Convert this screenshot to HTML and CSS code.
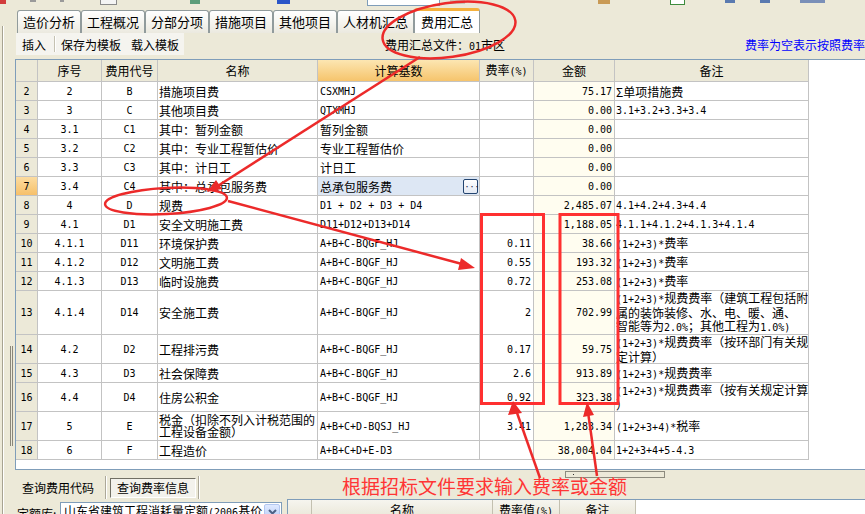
FILE: index.html
```html
<!DOCTYPE html>
<html lang="zh-CN">
<head>
<meta charset="utf-8">
<title>费用汇总</title>
<link rel="stylesheet" href="styles.css">
</head>
<body>
<div class="top">
  <span class="ic ic-red"></span>
  <span class="ic ic-g1"></span>
  <span class="ic ic-g2"></span>
  <span class="ic ic-grid"></span>
  <span class="ic ic-green"></span>
  <span class="ic ic-blue"></span>
  <span class="ic ic-box"></span>
  <span class="ic ic-g3"></span>
  <span class="ic ic-orange"></span>
  <span class="ic ic-gbox"></span>
  <span class="ic ic-b1"></span>
  <span class="ic ic-b2"></span>
  <span class="ic ic-b3"></span>
</div>
<div class="app">
  <div class="side"><span class="s1"></span><span class="s2"></span></div>
  <div class="main">
    <div class="tabs">
      <div class="tab">造价分析</div>
      <div class="tab">工程概况</div>
      <div class="tab">分部分项</div>
      <div class="tab">措施项目</div>
      <div class="tab">其他项目</div>
      <div class="tab">人材机汇总</div>
      <div class="tab active">费用汇总</div>
    </div>
    <div class="toolbar">
      <div class="tbgroup"><span>插入</span><span class="sep"></span><span>保存为模板</span><span class="gap">载入模板</span></div>
      <span class="file">费用汇总文件：<span class="m">01</span>市区</span>
      <span class="hint">费率为空表示按照费率</span>
    </div>
    <div class="panel">
      <table class="grid">
        <tr>
          <th class="rh w0"></th><th class="w1">序号</th><th class="w2">费用代号</th><th class="w3">名称</th><th class="w4 hl">计算基数</th><th class="w5">费率<span class="m">(%)</span></th><th class="w6">金额</th><th class="w7">备注</th>
        </tr>
        <tr><td class="rh m">2</td><td class="c m">2</td><td class="c m">B</td><td class="nm">措施项目费</td><td class="m">CSXMHJ</td><td class="r m"></td><td class="amt m">75.17</td><td class="nt">Σ单项措施费</td></tr>
        <tr><td class="rh m">3</td><td class="c m">3</td><td class="c m">C</td><td class="nm">其他项目费</td><td class="m">QTXMHJ</td><td class="r m"></td><td class="amt m">0.00</td><td class="nt m">3.1+3.2+3.3+3.4</td></tr>
        <tr><td class="rh m">4</td><td class="c m">3.1</td><td class="c m">C1</td><td class="nm">其中：暂列金额</td><td>暂列金额</td><td class="r m"></td><td class="amt m">0.00</td><td class="nt"></td></tr>
        <tr><td class="rh m">5</td><td class="c m">3.2</td><td class="c m">C2</td><td class="nm">其中：专业工程暂估价</td><td>专业工程暂估价</td><td class="r m"></td><td class="amt m">0.00</td><td class="nt"></td></tr>
        <tr><td class="rh m">6</td><td class="c m">3.3</td><td class="c m">C3</td><td class="nm">其中：计日工</td><td>计日工</td><td class="r m"></td><td class="amt m">0.00</td><td class="nt"></td></tr>
        <tr><td class="rh m selrh">7</td><td class="c m">3.4</td><td class="c m">C4</td><td class="nm">其中：总承包服务费</td><td class="selcell"><div class="cellflex"><span>总承包服务费</span><span class="dots">•••</span></div></td><td class="r m"></td><td class="amt m">0.00</td><td class="nt"></td></tr>
        <tr><td class="rh m">8</td><td class="c m">4</td><td class="c m">D</td><td class="nm">规费</td><td class="m">D1 + D2 + D3 + D4</td><td class="r m"></td><td class="amt m">2,485.07</td><td class="nt m">4.1+4.2+4.3+4.4</td></tr>
        <tr><td class="rh m">9</td><td class="c m">4.1</td><td class="c m">D1</td><td class="nm">安全文明施工费</td><td class="m">D11+D12+D13+D14</td><td class="r m"></td><td class="amt m">1,188.05</td><td class="nt m">4.1.1+4.1.2+4.1.3+4.1.4</td></tr>
        <tr><td class="rh m">10</td><td class="c m">4.1.1</td><td class="c m">D11</td><td class="nm">环境保护费</td><td class="m">A+B+C-BQGF_HJ</td><td class="r m">0.11</td><td class="amt m">38.66</td><td class="nt"><span class="m">(1+2+3)*</span>费率</td></tr>
        <tr><td class="rh m">11</td><td class="c m">4.1.2</td><td class="c m">D12</td><td class="nm">文明施工费</td><td class="m">A+B+C-BQGF_HJ</td><td class="r m">0.55</td><td class="amt m">193.32</td><td class="nt"><span class="m">(1+2+3)*</span>费率</td></tr>
        <tr><td class="rh m">12</td><td class="c m">4.1.3</td><td class="c m">D13</td><td class="nm">临时设施费</td><td class="m">A+B+C-BQGF_HJ</td><td class="r m">0.72</td><td class="amt m">253.08</td><td class="nt"><span class="m">(1+2+3)*</span>费率</td></tr>
        <tr class="h42"><td class="rh m">13</td><td class="c m">4.1.4</td><td class="c m">D14</td><td class="nm">安全施工费</td><td class="m">A+B+C-BQGF_HJ</td><td class="r m">2</td><td class="amt m">702.99</td><td class="nt"><span class="m">(1+2+3)*</span>规费费率（建筑工程包括附<br>属的装饰装修、水、电、暖、通、<br>智能等为<span class="m">2.0%</span>；其他工程为<span class="m">1.0%)</span></td></tr>
        <tr class="h28"><td class="rh m">14</td><td class="c m">4.2</td><td class="c m">D2</td><td class="nm">工程排污费</td><td class="m">A+B+C-BQGF_HJ</td><td class="r m">0.17</td><td class="amt m">59.75</td><td class="nt"><span class="m">(1+2+3)*</span>规费费率（按环部门有关规<br>定计算）</td></tr>
        <tr><td class="rh m">15</td><td class="c m">4.3</td><td class="c m">D3</td><td class="nm">社会保障费</td><td class="m">A+B+C-BQGF_HJ</td><td class="r m">2.6</td><td class="amt m">913.89</td><td class="nt"><span class="m">(1+2+3)*</span>规费费率</td></tr>
        <tr class="h29"><td class="rh m">16</td><td class="c m">4.4</td><td class="c m">D4</td><td class="nm">住房公积金</td><td class="m">A+B+C-BQGF_HJ</td><td class="r m">0.92</td><td class="amt m">323.38</td><td class="nt"><span class="m">(1+2+3)*</span>规费费率（按有关规定计算<br>）</td></tr>
        <tr class="h29"><td class="rh m">17</td><td class="c m">5</td><td class="c m">E</td><td class="nm tight">税金（扣除不列入计税范围的<br>工程设备金额）</td><td class="m">A+B+C+D-BQSJ_HJ</td><td class="r m">3.41</td><td class="amt m">1,283.34</td><td class="nt"><span class="m"> (1+2+3+4)*</span>税率</td></tr>
        <tr><td class="rh m">18</td><td class="c m">6</td><td class="c m">F</td><td class="nm">工程造价</td><td class="m">A+B+C+D+E-D3</td><td class="r m"></td><td class="amt m">38,004.04</td><td class="nt m">1+2+3+4+5-4.3</td></tr>
      </table>
    </div>
    <div class="bottom">
      <div class="hscroll"><span class="hdot"></span></div>
      <div class="btabs">
        <span class="btab">查询费用代码</span>
        <span class="bsep"></span>
        <span class="bbtn">查询费率信息</span>
        <span class="bsep2"></span>
      </div>
      <div class="brow">
        <span class="lbl">定额库:</span>
        <div class="selbox"><span class="seltext">山东省建筑工程消耗量定额<span class="m">(2006</span>基价</span><span class="selbtn"><svg width="9" height="6" viewBox="0 0 9 6"><path d="M1 1 L4.5 4.5 L8 1" fill="none" stroke="#4d6185" stroke-width="2"/></svg></span></div>
        <div class="rtable">
          <span class="rth r0"></span><span class="rth r1">名称</span><span class="rth r2">费率值<span class="m">(%)</span></span><span class="rth r3">备注</span>
        </div>
      </div>
    </div>
  </div>
</div>
<div class="note">根据招标文件要求输入费率或金额</div>
<svg class="marks" width="865" height="514" viewBox="0 0 865 514">
  <g fill="none" stroke="#ec2a2a" stroke-width="2.5">
    <ellipse cx="449" cy="30" rx="67" ry="27" transform="rotate(-8 449 30)"/>
    <ellipse cx="166" cy="201" rx="61" ry="13" transform="rotate(-3 166 201)"/>
    <line x1="420" y1="57" x2="213" y2="189"/>
    <line x1="228" y1="201" x2="462" y2="264"/>
    <line x1="540" y1="478" x2="516" y2="410"/>
    <line x1="597" y1="476" x2="588" y2="412"/>
  </g>
  <g fill="none" stroke="#ff3030" stroke-width="3">
    <rect x="481.5" y="214.5" width="62" height="189"/>
    <rect x="560" y="214.5" width="58" height="189"/>
  </g>
  <g fill="#ec2a2a">
    <polygon points="207,192 222,189 216,180"/>
    <polygon points="475,268 458,270 461,258"/>
    <polygon points="513,401 522,413 508,415"/>
    <polygon points="587,402 594,415 583,417"/>
  </g>
</svg>
</body>
</html>
```
FILE: styles.css
```css
* { box-sizing: border-box; }
html, body { margin: 0; padding: 0; }
body {
  width: 865px;
  height: 514px;
  overflow: hidden;
  position: relative;
  background: #ece9d8;
  font-family: "Noto Sans CJK SC", "Noto Sans", sans-serif;
  font-size: 12px;
  color: #000;
}
.m { font-family: "DejaVu Sans Mono", "Liberation Mono", monospace; font-size: 10px; }

/* top strip (cut-off toolbar) */
.top { height: 8px; display: flex; align-items: flex-start; }
.ic { display: block; flex: none; }
.ic-red { width: 6px; height: 4px; background: #d23c3c; }
.ic-g1 { margin-left: 24px; width: 6px; height: 2px; background: #9a9a9a; }
.ic-g2 { margin-left: 24px; width: 4px; height: 2px; background: #9a9a9a; }
.ic-grid { margin-left: 36px; width: 17px; height: 5px; border: 1px solid #8a8a8a; border-top: none; background: #f4f4f4; }
.ic-green { margin-left: 73px; width: 10px; height: 4px; background: #5c9d7a; }
.ic-blue { margin-left: 77px; width: 13px; height: 4px; background: #2a55c8; }
.ic-box { margin-left: 77px; width: 73px; height: 6px; border: 1px solid #7f9db9; border-top: none; background: #fff; }
.ic-g3 { margin-left: 10px; width: 15px; height: 4px; background: #c9c6b8; }
.ic-orange { margin-left: 133px; width: 12px; height: 4px; background: #c99a55; }
.ic-gbox { margin-left: 60px; width: 15px; height: 5px; border: 1px solid #3d8c3d; border-top: none; background: #fff; }
.ic-b1 { margin-left: 40px; width: 10px; height: 3px; background: #5a7ab0; }
.ic-b2 { margin-left: 25px; width: 10px; height: 3px; background: #5a7ab0; }
.ic-b3 { margin-left: 30px; width: 25px; height: 3px; background: #7a8fb8; }

.app { display: flex; height: 506px; }
.side { width: 15px; flex: none; display: flex; padding-top: 18px; }
.s1 { margin-left: 2px; width: 1px; background: #a7a391; box-shadow: 1px 0 0 #fff; }
.s2 { margin-left: 7px; margin-top: 320px; width: 3px; height: 100px; border-left: 1px solid #8a8779; border-right: 1px solid #8a8779; }
.main { flex: 1; min-width: 0; display: flex; flex-direction: column; }

/* tabs */
.tabs { height: 25px; display: flex; align-items: flex-end; padding-left: 2px; }
.tab {
  height: 23px;
  padding: 0 5px;
  border: 1px solid #919b9c;
  border-bottom: none;
  border-radius: 3px 3px 0 0;
  font-size: 13px;
  line-height: 22px;
  white-space: nowrap;
  background: linear-gradient(#ffffff, #f6f5f0 50%, #ebe9df);
}
.tab.active {
  height: 25px;
  padding: 0 6px;
  border-top: 3px solid #f5b13c;
  background: #fff;
}

/* toolbar */
.toolbar { height: 26px; flex: none; display: flex; align-items: flex-start; }
.tbgroup {
  height: 22px;
  margin-left: 1px;
  padding: 0 5px 0 6px;
  display: flex;
  align-items: center;
  background: #f5f4ef;
}
.sep { width: 1px; height: 16px; margin: 0 6px 0 8px; background: #c5c2b2; box-shadow: 1px 0 0 #fff; }
.gap { margin-left: 10px; }
.file { margin-left: 201px; line-height: 24px; white-space: nowrap; }
.hint { margin-left: auto; line-height: 24px; color: #0000ff; white-space: nowrap; }

/* grid panel */
.panel {
  height: 411px;
  flex: none;
  border: 1px solid #7f9db9;
  border-right: none;
  background: #fff;
  overflow: hidden;
}
.grid { border-collapse: separate; border-spacing: 0; table-layout: fixed; width: 793px; }
.grid th, .grid td {
  border-right: 1px solid #c3c3c3;
  border-bottom: 1px solid #c3c3c3;
  padding: 0 2px;
  white-space: nowrap;
  overflow: hidden;
  line-height: 13px;
  font-weight: normal;
  vertical-align: middle;
  text-align: left;
}
.grid th { height: 22px; background: #ece9d8; text-align: center; }
.grid th.hl { background: linear-gradient(#fce6b2, #f6c46c); }
.grid td { height: 19px; }
.grid tr.h42 td { height: 42px; }
.grid tr.h28 td { height: 28px; }
.grid tr.h29 td { height: 29px; }
.w0 { width: 22px; }
.w1 { width: 64px; }
.w2 { width: 56px; }
.w3 { width: 160px; }
.w4 { width: 162px; }
.w5 { width: 54px; }
.w6 { width: 81px; }
.w7 { width: 194px; }
.grid .rh { background: #ece9d8; text-align: center; padding: 0; }
.grid .selrh { background: linear-gradient(#fcdca0, #f6c06a); }
.grid .c { text-align: center; }
.grid .r { text-align: right; }
.grid .amt { text-align: right; background: #fffdf0; }
.grid .nm { padding-left: 1px; padding-right: 0; }
.grid .nm.tight { line-height: 12px; }
.grid .nt { padding-left: 1px; padding-right: 0; }
.grid .selcell { background: #dde7f4; padding-right: 1px; }
.cellflex { display: flex; align-items: center; justify-content: space-between; }
.dots {
  width: 15px;
  height: 15px;
  border: 1px solid #23446f;
  border-radius: 2px;
  background: linear-gradient(#ffffff, #e3e9f3);
  font-size: 6px;
  line-height: 13px;
  text-align: center;
  letter-spacing: -1px;
  color: #10203a;
}

/* bottom area */
.bottom { flex: 1; position: relative; padding-top: 6px; }
.hscroll {
  position: absolute;
  left: 550px;
  top: 1px;
  width: 100px;
  height: 7px;
  border: 1px solid #8c8a7e;
  background: #ece9d8;
}
.hdot { position: absolute; left: 7px; top: 2px; width: 1px; height: 1px; background: #333; }
.btabs { height: 23px; display: flex; align-items: center; }
.btab { margin-left: 7px; white-space: nowrap; }
.bsep { width: 2px; height: 23px; margin: 0 3px 0 11px; border-left: 1px solid #aca899; border-right: 1px solid #fff; }
.bbtn {
  height: 20px;
  padding: 0 6px;
  border: 1px solid;
  border-color: #716f64 #fff #fff #716f64;
  background: #f3f2ec;
  line-height: 18px;
  white-space: nowrap;
}
.bsep2 { width: 2px; height: 23px; margin-left: 2px; border-left: 1px solid #aca899; border-right: 1px solid #fff; }
.brow { display: flex; align-items: flex-start; }
.lbl { margin-left: 2px; margin-top: 6px; width: 43px; white-space: nowrap; }
.selbox {
  margin-top: 3px;
  width: 222px;
  height: 20px;
  border: 1px solid #7f9db9;
  background: #fff;
  display: flex;
  align-items: center;
  padding-left: 3px;
  overflow: hidden;
}
.seltext { flex: 1; white-space: nowrap; overflow: hidden; font-size: 12px; line-height: 18px; }
.selbtn {
  width: 16px;
  height: 16px;
  margin-right: 1px;
  border: 1px solid #b2c7f0;
  border-radius: 2px;
  background: linear-gradient(#dfe9ff, #b8cdf7);
  display: flex;
  align-items: center;
  justify-content: center;
}
.rtable {
  margin-left: 5px;
  flex: 1;
  height: 20px;
  display: flex;
  border: 1px solid #7f9db9;
  border-right: none;
  border-bottom: none;
  background: #fff;
}
.rth {
  height: 19px;
  background: linear-gradient(#f6f5ef, #e9e6d6);
  border-right: 1px solid #c3c0b0;
  text-align: center;
  line-height: 20px;
  white-space: nowrap;
}
.r0 { width: 24px; }
.r1 { width: 181px; }
.r2 { width: 67px; }
.r3 { width: 76px; }

/* annotations */
.note {
  position: absolute;
  left: 342px;
  top: 476px;
  font-size: 19px;
  line-height: 19px;
  color: #ff3535;
  white-space: nowrap;
}
.marks { position: absolute; left: 0; top: 0; pointer-events: none; }
```
